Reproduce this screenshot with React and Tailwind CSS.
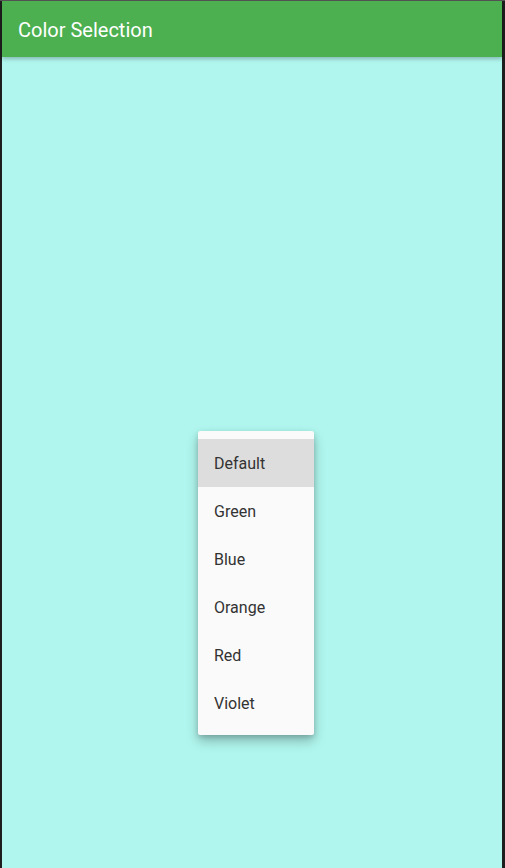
export default function App() {
  const items = ['Default', 'Green', 'Blue', 'Orange', 'Red', 'Violet'];
  return (
    <div className="relative h-[868px] w-[505px] overflow-hidden bg-[#1e1e1e] pt-px pl-[2px] pr-[3px] font-['Roboto',sans-serif]">
      <div className="absolute left-0 top-0 h-px w-full bg-[#555555]" />
      <div className="flex h-full flex-col bg-[#b0f6ee]">
        <header className="relative z-10 flex h-[56px] items-center bg-[#4caf50] px-4 pt-[2px] shadow-[0_2px_4px_rgba(0,0,0,0.25)]">
          <h1 className="text-[20px] font-normal text-white">Color Selection</h1>
        </header>
        <main className="flex-1" />
      </div>
      <div className="absolute left-[198px] top-[431px] z-20 w-[116px] rounded-[2px] bg-[#fafafa] py-2 shadow-[0_6px_12px_rgba(0,0,0,0.25),0_2px_5px_rgba(0,0,0,0.15)]">
        {items.map((c, i) => (
          <div
            key={c}
            className={`flex h-[48px] items-center px-4 pt-[2px] text-[16px] text-[#333333] ${i === 0 ? 'bg-[#dddddd]' : ''}`}
          >
            {c}
          </div>
        ))}
      </div>
    </div>
  );
}
